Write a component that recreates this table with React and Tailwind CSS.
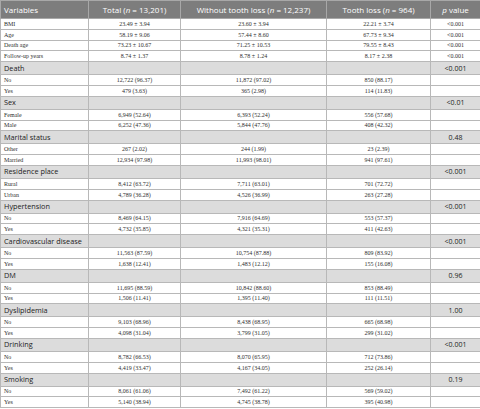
import React from 'react';

const continuous = [
  ['BMI', '23.49 ± 3.94', '23.60 ± 3.94', '22.21 ± 3.74', '<0.001'],
  ['Age', '58.19 ± 9.06', '57.44 ± 8.60', '67.73 ± 9.34', '<0.001'],
  ['Death age', '73.23 ± 10.67', '71.25 ± 10.53', '79.55 ± 8.43', '<0.001'],
  ['Follow-up years', '8.74 ± 1.37', '8.78 ± 1.24', '8.17 ± 2.38', '<0.001'],
];

const sections = [
  { title: 'Death', p: '<0.001', rows: [
    ['No', '12,722 (96.37)', '11,872 (97.02)', '850 (88.17)'],
    ['Yes', '479 (3.63)', '365 (2.98)', '114 (11.83)'],
  ] },
  { title: 'Sex', p: '<0.01', rows: [
    ['Female', '6,949 (52.64)', '6,393 (52.24)', '556 (57.68)'],
    ['Male', '6,252 (47.36)', '5,844 (47.76)', '408 (42.32)'],
  ] },
  { title: 'Marital status', p: '0.48', rows: [
    ['Other', '267 (2.02)', '244 (1.99)', '23 (2.39)'],
    ['Married', '12,934 (97.98)', '11,993 (98.01)', '941 (97.61)'],
  ] },
  { title: 'Residence place', p: '<0.001', rows: [
    ['Rural', '8,412 (63.72)', '7,711 (63.01)', '701 (72.72)'],
    ['Urban', '4,789 (36.28)', '4,526 (36.99)', '263 (27.28)'],
  ] },
  { title: 'Hypertension', p: '<0.001', rows: [
    ['No', '8,469 (64.15)', '7,916 (64.69)', '553 (57.37)'],
    ['Yes', '4,732 (35.85)', '4,321 (35.31)', '411 (42.63)'],
  ] },
  { title: 'Cardiovascular disease', p: '<0.001', rows: [
    ['No', '11,563 (87.59)', '10,754 (87.88)', '809 (83.92)'],
    ['Yes', '1,638 (12.41)', '1,483 (12.12)', '155 (16.08)'],
  ] },
  { title: 'DM', p: '0.96', rows: [
    ['No', '11,695 (88.59)', '10,842 (88.60)', '853 (88.49)'],
    ['Yes', '1,506 (11.41)', '1,395 (11.40)', '111 (11.51)'],
  ] },
  { title: 'Dyslipidemia', p: '1.00', rows: [
    ['No', '9,103 (68.96)', '8,438 (68.95)', '665 (68.98)'],
    ['Yes', '4,098 (31.04)', '3,799 (31.05)', '299 (31.02)'],
  ] },
  { title: 'Drinking', p: '<0.001', rows: [
    ['No', '8,782 (66.53)', '8,070 (65.95)', '712 (73.86)'],
    ['Yes', '4,419 (33.47)', '4,167 (34.05)', '252 (26.14)'],
  ] },
  { title: 'Smoking', p: '0.19', rows: [
    ['No', '8,061 (61.06)', '7,492 (61.22)', '569 (59.02)'],
    ['Yes', '5,140 (38.94)', '4,745 (38.78)', '395 (40.98)'],
  ] },
];

const sans = "font-['Open_Sans',sans-serif]";
const serif = "font-['Liberation_Serif',serif]";
const cell = 'border border-[#b8b8b8] p-0 leading-none';

const DataRow = ({ row }) => (
  <tr className="h-[10.8px] bg-white">
    <td className={`${cell} ${serif} text-[6px] text-[#2e2e2e] pl-[3px] text-left`}>{row[0]}</td>
    {row.slice(1).map((v, i) => (
      <td key={i} className={`${cell} ${serif} text-[6px] text-[#2e2e2e] text-center`}>{v}</td>
    ))}
    {row.length < 5 && <td className={cell} />}
  </tr>
);

export default function App() {
  return (
    <div className="w-[480px] h-[409px] bg-white">
      <table className="w-[480px] table-fixed border-collapse">
        <colgroup>
          <col className="w-[88px]" />
          <col className="w-[92px]" />
          <col className="w-[146px]" />
          <col className="w-[104px]" />
          <col className="w-[50px]" />
        </colgroup>
        <thead>
          <tr className={`h-[18px] bg-[#7d7d7d] text-white ${sans} text-[8px]`}>
            <th className="border border-[#a8a8a8] font-normal text-left pl-[3px]">Variables</th>
            <th className="border border-[#a8a8a8] font-normal">Total (<i>n</i> = 13,201)</th>
            <th className="border border-[#a8a8a8] font-normal">Without tooth loss (<i>n</i> = 12,237)</th>
            <th className="border border-[#a8a8a8] font-normal">Tooth loss (<i>n</i> = 964)</th>
            <th className="border border-[#a8a8a8] font-normal"><i>p</i> value</th>
          </tr>
        </thead>
        <tbody>
          {continuous.map((r) => (
            <DataRow key={r[0]} row={r} />
          ))}
          {sections.map((s) => (
            <React.Fragment key={s.title}>
              <tr className={`h-[13px] bg-[#dcdcdc] ${sans} text-[#222]`}>
                <td className={`${cell} text-[7.3px] text-left pl-[3px]`}>{s.title}</td>
                <td className={cell} />
                <td className={cell} />
                <td className={cell} />
                <td className={`${cell} text-[7px] text-center`}>{s.p}</td>
              </tr>
              {s.rows.map((r) => (
                <DataRow key={s.title + r[0]} row={r} />
              ))}
            </React.Fragment>
          ))}
        </tbody>
      </table>
    </div>
  );
}
